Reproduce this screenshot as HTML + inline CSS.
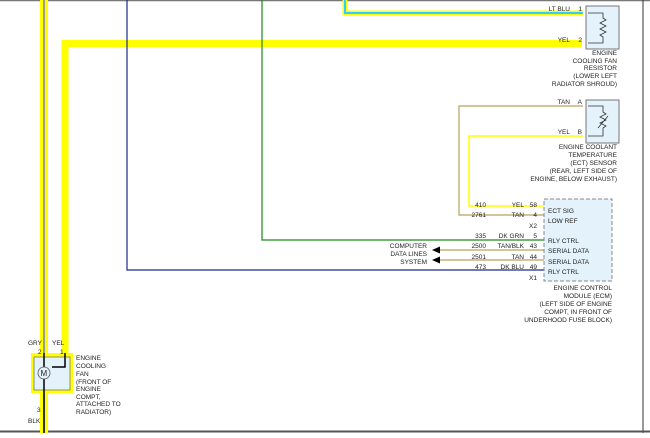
<!DOCTYPE html>
<html><head><style>
body{margin:0;width:650px;height:433px;overflow:hidden;background:#fff}
svg text{font-family:"Liberation Sans",sans-serif;font-size:6.5px;fill:#222}
</style></head><body>
<svg width="650" height="433" viewBox="0 0 650 433" xmlns="http://www.w3.org/2000/svg">
<rect width="650" height="433" fill="#fff"/>
<line x1="0" y1="0.5" x2="650" y2="0.5" stroke="#777" stroke-width="1.5"/>
<line x1="643" y1="0" x2="643" y2="433" stroke="#333" stroke-width="1"/>
<line x1="0" y1="431.5" x2="650" y2="431.5" stroke="#555" stroke-width="2"/>
<rect x="40" y="0" width="8" height="353" fill="#ff0"/>
<rect x="43" y="0" width="2" height="353" fill="#999"/>
<rect x="40" y="393" width="8" height="40" fill="#ff0"/>
<rect x="43" y="393" width="2" height="40" fill="#333"/>
<path d="M65 353 V43.5 H582" fill="none" stroke="#ff0" stroke-width="7"/>
<path d="M127 0 V270 H582" fill="none" stroke="#1a2a8a" stroke-width="1.2"/>
<path d="M262 0 V240 H582" fill="none" stroke="#1a8a1a" stroke-width="1.2"/>
<path d="M345 0 V13 H583" fill="none" stroke="#ff0" stroke-width="5"/>
<path d="M345 0 V13 H583" fill="none" stroke="#3cf" stroke-width="2"/>
<path d="M583 106 H459 V215 H582" fill="none" stroke="#b9a060" stroke-width="1.2"/>
<path d="M583 136 H469 V206 H582" fill="none" stroke="#ff0" stroke-width="1.5"/>
<path d="M582 250 H440 M582 260 H440" stroke="#b9a060" stroke-width="1.2"/>
<polygon points="432,250 440,246.5 440,253.5" fill="#000"/>
<polygon points="432,260 440,256.5 440,263.5" fill="#000"/>
<rect x="586" y="6" width="33" height="43" fill="#e3f2fb" stroke="#777"/>
<path d="M588 13 H603 V18 l3 2 -6 3 6 3 -6 3 6 3 -6 3 3 2 V43 H588" fill="none" stroke="#333" stroke-width="0.8"/>
<rect x="586" y="100" width="33" height="43" fill="#e3f2fb" stroke="#777"/>
<path d="M588 106 H603 V112 l3 2 -6 3 6 3 -6 3 6 3 -3 2 V136 H588 M598 128 L608 116" fill="none" stroke="#333" stroke-width="0.8"/>
<rect x="544" y="199" width="68" height="82" fill="#e3f2fb" stroke="#888" stroke-dasharray="4 2"/>
<g text-anchor="start">
<text x="548" y="213">ECT SIG</text><text x="548" y="223">LOW REF</text>
<text x="548" y="243">RLY CTRL</text><text x="548" y="253">SERIAL DATA</text>
<text x="548" y="264">SERIAL DATA</text><text x="548" y="274">RLY CTRL</text>
</g>
<g text-anchor="end">
<text x="582" y="11">1</text><text x="570" y="11">LT BLU</text>
<text x="582" y="42">2</text><text x="570" y="42">YEL</text>
<text x="582" y="104">A</text><text x="570" y="104">TAN</text>
<text x="582" y="134">B</text><text x="570" y="134">YEL</text>
<text x="537" y="207">58</text><text x="524" y="207">YEL</text><text x="486" y="207">410</text>
<text x="537" y="217">4</text><text x="524" y="217">TAN</text><text x="486" y="217">2761</text>
<text x="537" y="228">X2</text>
<text x="537" y="238">5</text><text x="524" y="238">DK GRN</text><text x="486" y="238">335</text>
<text x="537" y="248">43</text><text x="524" y="248">TAN/BLK</text><text x="486" y="248">2500</text>
<text x="537" y="259">44</text><text x="524" y="259">TAN</text><text x="486" y="259">2501</text>
<text x="537" y="269">49</text><text x="524" y="269">DK BLU</text><text x="486" y="269">473</text>
<text x="537" y="280">X1</text>
<text x="427" y="248">COMPUTER</text><text x="427" y="256">DATA LINES</text><text x="427" y="264">SYSTEM</text>
<text x="617" y="55">ENGINE</text><text x="617" y="63">COOLING FAN</text><text x="617" y="70">RESISTOR</text><text x="617" y="78">(LOWER LEFT</text><text x="617" y="86">RADIATOR SHROUD)</text>
<text x="617" y="149">ENGINE COOLANT</text><text x="617" y="157">TEMPERATURE</text><text x="617" y="165">(ECT) SENSOR</text><text x="617" y="173">(REAR, LEFT SIDE OF</text><text x="617" y="181">ENGINE, BELOW EXHAUST)</text>
<text x="612" y="290">ENGINE CONTROL</text><text x="612" y="298">MODULE (ECM)</text><text x="612" y="306">(LEFT SIDE OF ENGINE</text><text x="612" y="314">COMPT, IN FRONT OF</text><text x="612" y="322">UNDERHOOD FUSE BLOCK)</text>
</g>
<rect x="31" y="353" width="42" height="40" fill="#ff0"/>
<rect x="34" y="357" width="36" height="33" fill="#e3f2fb" stroke="#777" stroke-width="0.8"/>
<path d="M44 353 V393 M65 353 V367 H52" stroke="#000" stroke-width="1.5" fill="none"/>
<circle cx="44" cy="373" r="6" fill="#e3f2fb" stroke="#555" stroke-width="0.8"/>
<text x="40.5" y="376" style="font-size:8px">M</text>
<text x="28" y="345">GRY</text><text x="52" y="345">YEL</text>
<text x="38" y="354">2</text><text x="60" y="354">1</text>
<text x="37" y="412">3</text><text x="28" y="423">BLK</text>
<text x="76" y="360">ENGINE</text><text x="76" y="368">COOLING</text><text x="76" y="376">FAN</text><text x="76" y="384">(FRONT OF</text><text x="76" y="391">ENGINE</text><text x="76" y="399">COMPT,</text><text x="76" y="406">ATTACHED TO</text><text x="76" y="414">RADIATOR)</text>
</svg>
</body></html>
